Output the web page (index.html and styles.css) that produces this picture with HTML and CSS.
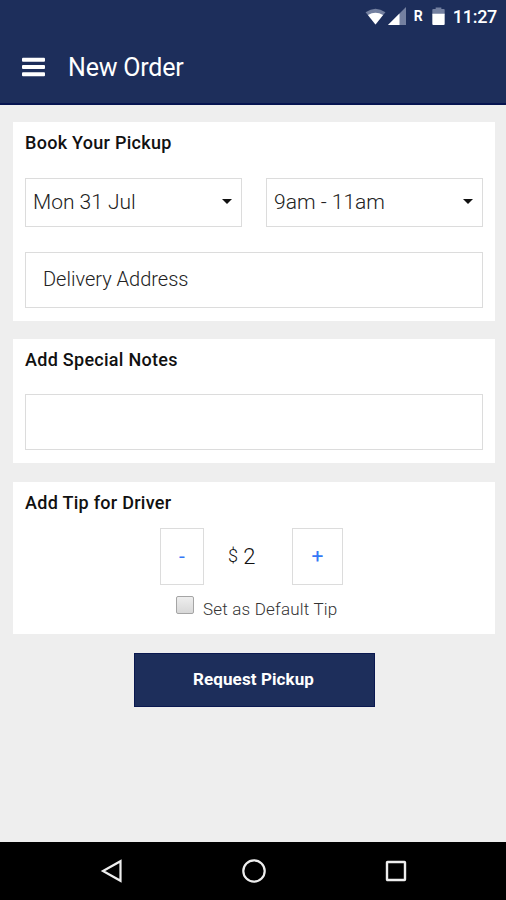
FILE: index.html
```html
<!DOCTYPE html>
<html lang="en">
<head>
    <meta charset="UTF-8">
    <meta name="viewport" content="width=device-width, initial-scale=1.0">
    <title>New Order</title>
    <link rel="stylesheet" href="styles.css">
</head>
<body>

    <header class="header">
        <div class="status-bar">
            <svg class="wifi" width="21" height="17" viewBox="0 0 22 18">
                <path d="M0.5 4.5Q11 -3 21.5 4.5L11 17.5Z" fill="#7480a0"/>
                <path d="M3 7.5Q11 2.5 19 7.5L11 17.5Z" fill="#fff"/>
            </svg>
            <svg class="signal" width="18" height="18" viewBox="0 0 18 18">
                <path d="M18 0V18H0Z" fill="#7480a0"/>
                <path d="M11.5 6.5V18H0Z" fill="#fff"/>
            </svg>
            <span class="roaming">R</span>
            <svg class="battery" width="13" height="19" viewBox="0 0 13 20">
                <path d="M3.5 0.5H9.5V2H12Q13 2 13 3V8H0V3Q0 2 1 2H3.5Z" fill="#7480a0"/>
                <path d="M0 7H13V18Q13 19 12 19H1Q0 19 0 18Z" fill="#fff"/>
            </svg>
            <span class="clock">11:27</span>
        </div>
        <div class="toolbar">
            <button class="menu-btn" aria-label="Menu">
                <svg width="23" height="20" viewBox="0 0 23 20" fill="#fff">
                    <rect y="0.8" width="23" height="4" rx="1"/>
                    <rect y="8" width="23" height="4" rx="1"/>
                    <rect y="15.2" width="23" height="4" rx="1"/>
                </svg>
            </button>
            <h1>New Order</h1>
        </div>
    </header>

    <main class="content">
        <section class="card pickup">
            <h2>Book Your Pickup</h2>
            <div class="select-row">
                <div class="select">
                    <span class="date">Mon 31 Jul</span>
                    <span class="arrow"></span>
                </div>
                <div class="select">
                    <span class="time">9am - 11am</span>
                    <span class="arrow"></span>
                </div>
            </div>
            <div class="field address">Delivery Address</div>
        </section>

        <section class="card notes">
            <h2>Add Special Notes</h2>
            <div class="field"></div>
        </section>

        <section class="card tip">
            <h2>Add Tip for Driver</h2>
            <div class="tip-row">
                <button class="tip-btn minus">-</button>
                <span class="amount"><span class="currency">$</span> 2</span>
                <button class="tip-btn plus">+</button>
            </div>
            <div class="default-tip">
                <span class="checkbox"></span>
                <span class="default-label">Set as Default Tip</span>
            </div>
        </section>

        <button class="request-btn">Request Pickup</button>
    </main>

    <footer class="nav-bar">
        <svg width="24" height="26" viewBox="0 0 24 26" fill="none" stroke="#eee" stroke-width="2.2">
            <path d="M20.5 3.2V22.8L3 13Z"/>
        </svg>
        <svg width="24" height="26" viewBox="0 0 24 26" fill="none" stroke="#eee" stroke-width="2.2">
            <circle cx="12" cy="13" r="10.7"/>
        </svg>
        <svg width="24" height="26" viewBox="0 0 24 26" fill="none" stroke="#eee" stroke-width="2.4">
            <rect x="3" y="4" width="18" height="18" rx="0.5"/>
        </svg>
    </footer>

</body>
</html>
```

FILE: styles.css
```css
* {
    box-sizing: border-box;
}

body {
    margin: 0;
    height: 900px;
    display: flex;
    flex-direction: column;
    background: #eeeeee;
    font-family: Roboto, "Liberation Sans", sans-serif;
    color: #111;
    overflow: hidden;
}

h1, h2 {
    margin: 0;
}

button {
    padding: 0;
    border: none;
    background: none;
    font-family: inherit;
}

/* Header */
.header {
    height: 105px;
    background: #1d2e5b;
    border-bottom: 2px solid #061450;
    color: white;
}

.status-bar {
    display: flex;
    align-items: center;
    justify-content: flex-end;
    height: 32px;
    padding-right: 9px;
}

.signal {
    margin-left: 2px;
}

.roaming {
    margin-left: 8px;
    font-size: 14px;
    font-weight: 700;
}

.battery {
    margin-left: 9px;
}

.clock {
    margin-left: 8px;
    font-size: 18px;
    font-weight: 500;
    letter-spacing: -0.3px;
}

.toolbar {
    display: flex;
    align-items: center;
    height: 70px;
    padding-left: 22px;
}

.menu-btn {
    display: flex;
}

.toolbar h1 {
    margin-left: 23px;
    font-size: 25px;
    font-weight: 400;
    letter-spacing: -0.2px;
}

/* Cards */
.content {
    flex: 1;
    display: flex;
    flex-direction: column;
    padding: 17px 11px 0 13px;
}

.card {
    padding: 10px 12px 0;
    background: white;
}

.card h2 {
    font-size: 18px;
    font-weight: 500;
    line-height: 22px;
    letter-spacing: 0.28px;
}

.pickup {
    height: 199px;
}

.notes {
    height: 124px;
    margin-top: 18px;
}

.tip {
    height: 152px;
    margin-top: 19px;
}

.select-row {
    display: flex;
    gap: 24px;
    margin-top: 24px;
}

.select {
    flex: 1;
    display: flex;
    align-items: center;
    justify-content: space-between;
    height: 49px;
    padding: 0 9px 2px 7px;
    border: 1px solid #dcdcdc;
    color: #222;
    font-size: 21px;
    font-weight: 300;
}

.arrow {
    border: 5px solid transparent;
    border-top: 5px solid #111;
    border-bottom: none;
}

.field {
    height: 56px;
    border: 1px solid #dcdcdc;
}

.address {
    margin-top: 25px;
    padding-left: 17px;
    color: #222;
    font-size: 20px;
    font-weight: 300;
    line-height: 53px;
}

.notes .field {
    margin-top: 23px;
}

/* Tip */
.tip-row {
    display: flex;
    align-items: center;
    margin-top: 14px;
    padding-left: 135px;
}

.tip-btn {
    height: 57px;
    padding-bottom: 2px;
    border: 1px solid #dcdcdc;
    color: #3478f6;
    font-size: 21px;
}

.minus {
    width: 44px;
}

.plus {
    width: 51px;
}

.amount {
    width: 88px;
    padding-left: 24px;
    font-size: 22px;
    font-weight: 300;
}

.currency {
    font-size: 18px;
    vertical-align: 2px;
}

.default-tip {
    display: flex;
    margin-top: 11px;
    padding-left: 151px;
}

.checkbox {
    width: 18px;
    height: 18px;
    border: 1px solid #a5a5a5;
    border-radius: 2px;
    background: linear-gradient(#eee, #d8d8d8);
}

.default-label {
    margin-left: 9px;
    color: #333;
    font-size: 17px;
    font-weight: 300;
    line-height: 26px;
    letter-spacing: 0.2px;
}

.request-btn {
    align-self: center;
    width: 241px;
    height: 54px;
    margin-top: 19px;
    padding: 0 1px 2px 0;
    background: #1d2e5b;
    border: 1px solid #0a1850;
    color: white;
    font-size: 17px;
    font-weight: 700;
    letter-spacing: 0.1px;
}

/* Android navigation */
.nav-bar {
    display: flex;
    align-items: center;
    justify-content: space-between;
    height: 58px;
    padding: 0 98px 0 100px;
    background: black;
}
```
